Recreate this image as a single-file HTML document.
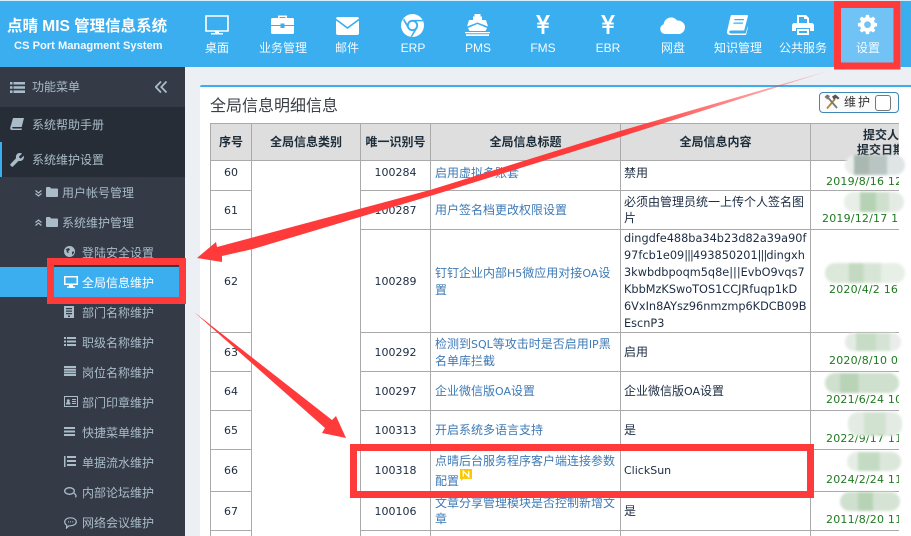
<!DOCTYPE html>
<html><head><meta charset="utf-8"><title>全局信息维护</title>
<style>
html,body{margin:0;padding:0}
body{width:911px;height:536px;overflow:hidden;position:relative;background:#ecf0f5;font:12px/16px "Liberation Sans","Noto Sans CJK SC",sans-serif;color:#fff}
.abs,.nav,.s,.ic{position:absolute}
#top{position:absolute;left:0;top:1px;width:911px;height:66px;background:#3baef0}
#topline{position:absolute;left:0;top:0;width:911px;height:1px;background:#d8eefb}
.nav{top:40px;width:66px;text-align:center;line-height:16px;font-size:12px;color:#f4fbff}
.ic{fill:#fff;stroke:none}
#side{position:absolute;left:0;top:67px;width:185px;height:469px;background:#353a47}
.s{white-space:nowrap;color:#a9bcc8;line-height:16px;font-size:12px}
.si{position:absolute;fill:#a9bcc8;stroke:none}
#panel{position:absolute;left:200px;top:85px;width:711px;height:451px;background:#fff;border-top:2px solid #3baef0;box-sizing:border-box;border-top-left-radius:2px}
#wrap{position:absolute;left:210px;top:123px;width:689px;height:413px;overflow:hidden}
table{border-collapse:collapse;table-layout:fixed;width:831px;font:12px/16px "Noto Sans CJK SC","Liberation Sans",sans-serif;color:#1c2c42}
td,th{border:1px solid #aaa;padding:0;overflow:hidden;vertical-align:middle}
th{background:#dedede;font-weight:bold;text-align:center;color:#1d2d3a;height:36px}
td{text-align:center}
td.t{text-align:left;padding-left:4px;color:#3d7ab5}
td.c{text-align:left;padding-left:3px;color:#1c2c42}
td.d{color:#1f7a1f;white-space:nowrap;line-height:18px;padding-top:16px;box-sizing:border-box;letter-spacing:.2px}
i.l{font:normal 11px/16px "DejaVu Sans",sans-serif}
.blur{position:absolute;border-radius:10px;filter:blur(1.2px)}
</style></head><body>
<div id="topline"></div>
<div id="top"></div>
<div class="abs" style="left:7px;top:17px;font-weight:bold;font-size:15.5px;line-height:20px;white-space:nowrap;color:#fff">点晴 MIS 管理信息系统</div>
<div class="abs" style="left:14px;top:38px;font-weight:bold;font-size:11.15px;line-height:16px;white-space:nowrap;color:#f2f9fe">CS Port Managment System</div>

<div class="abs" style="left:835px;top:1px;width:66px;height:66px;background:#72c3f5"></div>

<!-- nav icons -->
<svg class="ic" style="left:205px;top:15px" width="24" height="21" viewBox="0 0 24 21"><path d="M1 1h22v15H1z" fill="none" stroke="#fff" stroke-width="1.6"/><path d="M10 16h4v2h4v1.5H6V18h4z"/></svg>
<svg class="ic" style="left:271px;top:14px" width="23" height="20" viewBox="0 0 23 20"><path d="M7 4V1.5h9V4h-1.5V3h-6v1zM1.5 4h20A1.5 1.5 0 0 1 23 5.5V11H13.500V9.500h-4V11H0V5.500A1.500 1.500 0 0 1 1.500 4zM0 12h9.500v2h4v-2H23v6.500a1.500 1.500 0 0 1-1.500 1.500h-20A1.500 1.500 0 0 1 0 18.500z"/></svg>
<svg class="ic" style="left:336px;top:17px" width="23" height="18" viewBox="0 0 23 18"><path d="M2 0h19a2 2 0 0 1 2 1.500L11.500 10 0 1.500A2 2 0 0 1 2 0zM0 3.500l11.500 8.500L23 3.500V16a2 2 0 0 1-2 2H2a2 2 0 0 1-2-2z"/></svg>
<svg class="ic" style="left:401px;top:14px" width="23" height="23" viewBox="0 0 23 23"><circle cx="11.500" cy="11.500" r="11.500"/><circle cx="11.500" cy="11.500" r="5.600" fill="#3baef0"/><circle cx="11.500" cy="11.500" r="3.800"/><path d="M11.500 5.900H21.500L22 7.400 11.500 7.400zM6.700 14.300L2 6l1.100-1.500L8 13zM16.300 14.300L11 23 9.500 22.800 15 13z" fill="#3baef0"/></svg>
<svg class="ic" style="left:465px;top:14px" width="25" height="22" viewBox="0 0 25 22"><path d="M9.500 0h6v2.500h1.500V6H21l2 6.500-10.500-4-10.500 4L4 6h4V2.500h1.500zM12.500 10L22 14l-1.500 3h-16L3 14zM0 18h25v1.200H0zM1 20.300h23V22H1z"/></svg>
<svg class="ic" style="left:536px;top:15px" width="14" height="19" viewBox="0 0 17 20" preserveAspectRatio="none"><path d="M0 0h4.200l4.300 7.500L12.800 0H17l-5 8h3.500v2H10.200v1.500h5.300v2h-5.300V20H6.800v-6.500H1.500v-2h5.300V10H1.500V8H5z"/></svg>
<svg class="ic" style="left:601px;top:15px" width="14" height="19" viewBox="0 0 17 20" preserveAspectRatio="none"><path d="M0 0h4.200l4.300 7.500L12.800 0H17l-5 8h3.500v2H10.200v1.500h5.300v2h-5.300V20H6.800v-6.500H1.500v-2h5.300V10H1.500V8H5z"/></svg>
<svg class="ic" style="left:660px;top:16px" width="25" height="18" viewBox="0 0 25 18"><path d="M5 18A5 5 0 0 1 3.600 8.300 7.500 7.500 0 0 1 17.200 4.600 6.800 6.800 0 0 1 19.500 18z"/></svg>
<svg class="ic" style="left:726px;top:15px" width="22" height="20" viewBox="0 0 22 20"><path d="M6 0h15.500l.5 1-3.800 14.500H5.500c-1.800 0-2.500 1-2.300 1.800.2.700 1 1.200 2 1.200h14.500l2-7.500v2.500L20 20H4.500C2 20 .5 18.500 1 16.500L4.500 1.500C4.700.6 5.200 0 6 0zM8.500 4l-.3 1.300h9.500L18 4zM7.600 7.500l-.3 1.300h9.500l.3-1.300z"/></svg>
<svg class="ic" style="left:792px;top:15px" width="22" height="20" viewBox="0 0 22 20"><path d="M5 0h9l3 3v5h-2V4h-3V2H7v6H5zM2.500 8h17A2.500 2.500 0 0 1 22 10.500V16h-4v-3H4v3H0v-5.500A2.500 2.500 0 0 1 2.500 8zM5 14h12v6H5z"/><path d="M7 16h8v2H7z" fill="#3baef0"/></svg>
<svg class="ic" style="left:857px;top:14px" width="21" height="21" viewBox="-1 -1 23 23"><path fill-rule="evenodd" d="M8.800 0h3.400l.5 2.700 1.700.7 2.300-1.500 2.400 2.400-1.500 2.300.7 1.700L21 9v3.400l-2.700.5-.7 1.700 1.500 2.300-2.400 2.400-2.300-1.500-1.700.7-.5 2.500H8.800l-.5-2.500-1.700-.7-2.300 1.500-2.400-2.400 1.500-2.300-.7-1.700L0 12.400V9l2.700-.5.700-1.700L1.900 4.300l2.400-2.400 2.300 1.500 1.700-.7zM10.500 7a3.700 3.700 0 1 0 0 7.400 3.700 3.700 0 0 0 0-7.400z"/></svg>

<div class="nav" style="left:184px">桌面</div>
<div class="nav" style="left:250px">业务管理</div>
<div class="nav" style="left:314px">邮件</div>
<div class="nav" style="left:380px">ERP</div>
<div class="nav" style="left:445px">PMS</div>
<div class="nav" style="left:510px">FMS</div>
<div class="nav" style="left:575px">EBR</div>
<div class="nav" style="left:640px">网盘</div>
<div class="nav" style="left:705px">知识管理</div>
<div class="nav" style="left:770px">公共服务</div>
<div class="nav" style="left:835px">设置</div>

<!-- sidebar -->
<div id="side"></div>
<div class="abs" style="left:0;top:107px;width:185px;height:70px;background:#262d36"></div>
<div class="abs" style="left:0;top:142px;width:2px;height:35px;background:#3baef0"></div>
<div class="abs" style="left:0;top:267px;width:185px;height:30px;background:#3baef0"></div>

<svg class="si" style="left:10px;top:82px" width="15" height="11" viewBox="0 0 15 11"><path d="M0 0h2.500v2.500H0zM3.500 0H15v2.500H3.500zM0 4.200h2.500v2.500H0zM3.500 4.200H15v2.500H3.500zM0 8.400h2.500V11H0zM3.500 8.400H15V11H3.500z"/></svg>
<div class="s" style="left:32px;top:79px">功能菜单</div>
<svg class="si" style="left:155px;top:81px;fill:none;stroke:#a9bcc8;stroke-width:1.800" width="12" height="12" viewBox="0 0 12 12"><path d="M6 .5L.8 6 6 11.500M11.500.5L6.300 6l5.200 5.500"/></svg>

<svg class="si" style="left:10px;top:118px" width="14" height="12" viewBox="0 0 14 12"><path d="M3 0h11l-2.300 9H3C1.800 9 1.800 10.500 3 10.500h9L11.500 12H2C.5 12 0 11 .3 9.500z"/></svg>
<div class="s" style="left:32px;top:117px">系统帮助手册</div>
<svg class="si" style="left:10px;top:153px" width="14" height="14" viewBox="0 0 14 14"><path d="M9.500 0c1 0 2 .3 2.500.7L9 3.500l.5 1.500 1.500.5L13.800 2.700c.5 2.200-.3 4.700-3.300 5.300-.7.100-1.300 0-1.900-.1L3 13.500c-1 1-3.500-1.200-2.500-2.500L6 5.300C5.500 2.500 7 0 9.500 0z"/></svg>
<div class="s" style="left:32px;top:152px">系统维护设置</div>

<svg class="si" style="left:35px;top:190px;fill:none;stroke:#a9bcc8;stroke-width:1.200" width="7" height="7" viewBox="0 0 7 7"><path d="M.5 .5L3.500 3 6.500 .5M.5 3.500L3.500 6 6.500 3.500"/></svg>
<svg class="si" style="left:46px;top:187px" width="12" height="10" viewBox="0 0 12 10"><path d="M0 1a1 1 0 0 1 1-1h3l1 1.500h6a1 1 0 0 1 1 1V9a1 1 0 0 1-1 1H1a1 1 0 0 1-1-1z"/></svg>
<div class="s" style="left:62px;top:185px">用户帐号管理</div>
<svg class="si" style="left:35px;top:219px;fill:none;stroke:#a9bcc8;stroke-width:1.200" width="7" height="7" viewBox="0 0 7 7"><path d="M.5 3.500L3.500 1 6.500 3.500M.5 6.500L3.500 4 6.500 6.500"/></svg>
<svg class="si" style="left:46px;top:217px" width="12" height="10" viewBox="0 0 12 10"><path d="M0 1a1 1 0 0 1 1-1h3l1 1.500h6a1 1 0 0 1 1 1V9a1 1 0 0 1-1 1H1a1 1 0 0 1-1-1z"/></svg>
<div class="s" style="left:62px;top:215px">系统维护管理</div>

<svg class="si" style="left:64px;top:246px" width="11" height="11" viewBox="0 0 11 11"><circle cx="5.500" cy="5.500" r="5.500"/><path d="M2 3l3-1 1 2-2 1 1 2-2-.5zM8 6l1.500-1 .5 2-2 2z" fill="#353a47"/></svg>
<div class="s" style="left:82px;top:245px">登陆安全设置</div>

<svg class="si" style="left:64px;top:276px;fill:#fff" width="14" height="12" viewBox="0 0 14 12"><path fill-rule="evenodd" d="M0 0h14v9H9v1.500h2V12H3v-1.500h2V9H0zM1.500 1.500v6h11v-6z"/></svg>
<div class="s" style="left:82px;top:275px;color:#fff">全局信息维护</div>

<svg class="si" style="left:64px;top:306px" width="10" height="12" viewBox="0 0 10 12"><path fill-rule="evenodd" d="M0 0h10v12H0zM2 2v1.200h6V2zM2 4.500v1.200h6V4.500zM2 7v1.200h6V7zM4 9.500V11h2V9.500z"/></svg>
<div class="s" style="left:82px;top:305px">部门名称维护</div>
<svg class="si" style="left:64px;top:337px" width="12" height="9" viewBox="0 0 12 9"><path d="M0 0h2v2H0zM3 0h9v2H3zM0 3.500h2v2H0zM3 3.500h9v2H3zM0 7h2v2H0zM3 7h9v2H3z"/></svg>
<div class="s" style="left:82px;top:335px">职级名称维护</div>
<svg class="si" style="left:64px;top:366px" width="12" height="10" viewBox="0 0 12 10"><path d="M0 0h12v2H0zM0 2.700h12v2H0zM0 5.400h12v2H0zM0 8h12v2H0z"/></svg>
<div class="s" style="left:82px;top:365px">岗位名称维护</div>
<svg class="si" style="left:64px;top:396px" width="14" height="11" viewBox="0 0 14 11"><path fill-rule="evenodd" d="M0 0h14v11H0zM1 1v9h12V1zM2 8.500c0-2 1-2.500 1.500-2.500a1.500 1.500 0 1 1 1.500 0c.5 0 1.500.5 1.500 2.500zM8 3h4v1H8zM8 5h4v1H8zM8 7h4v1H8z"/></svg>
<div class="s" style="left:82px;top:395px">部门印章维护</div>
<svg class="si" style="left:64px;top:427px" width="11" height="9" viewBox="0 0 11 9"><path d="M0 0h11v2H0zM0 3.500h11v2H0zM0 7h11v2H0z"/></svg>
<div class="s" style="left:82px;top:425px">快捷菜单维护</div>
<svg class="si" style="left:64px;top:456px" width="12" height="11" viewBox="0 0 12 11"><path d="M0 0h1.500v11H0zM3 0h9v2H3zM3 4h9v2H3zM3 8h9v2H3z"/></svg>
<div class="s" style="left:82px;top:455px">单据流水维护</div>
<svg class="si" style="left:64px;top:487px;fill:none;stroke:#a9bcc8;stroke-width:1.300" width="13" height="11" viewBox="0 0 13 11"><ellipse cx="5.500" cy="4" rx="4.800" ry="3.300"/><path d="M10 6.500c2 .8 2.500 2.500 1.500 3.800"/></svg>
<div class="s" style="left:82px;top:485px">内部论坛维护</div>
<svg class="si" style="left:64px;top:517px;fill:none;stroke:#a9bcc8;stroke-width:1.200" width="13" height="12" viewBox="0 0 13 12"><path d="M6.500.8c3.300 0 5.800 1.700 5.800 4s-2.500 4-5.800 4H5L2.500 11l.3-2.800C1.500 7.500.7 6.300.7 4.800c0-2.300 2.500-4 5.800-4z"/><path d="M4 4.800h.8M6.200 4.800H7M8.400 4.800h.8" stroke-width="1.300"/></svg>
<div class="s" style="left:82px;top:515px">网络会议维护</div>

<!-- panel -->
<div id="panel"></div>
<div class="abs" style="left:210px;top:94px;font:16px/20px 'Noto Sans CJK SC',sans-serif;color:#3a3f45;white-space:nowrap">全局信息明细信息</div>
<div class="abs" style="left:819px;top:92px;width:78px;height:19px;border:1px solid #3f88b5;border-radius:4px;background:#fbfbfb"></div>
<svg class="abs" style="left:824px;top:94px" width="16" height="16" viewBox="0 0 16 16"><path d="M3 14.500L11 5" stroke="#b8862e" stroke-width="1.800" fill="none"/><path d="M3.500 3L13 14" stroke="#777" stroke-width="1.800" fill="none"/><path d="M8 2.500L11.500 .5 15.500 4 14 5.500 12 4 10 6z" fill="#555"/><path d="M.5 3L3 .5 6 2 3.500 5.500z" fill="#777"/></svg>
<div class="abs" style="left:844px;top:94px;font:12px/16px 'Noto Sans CJK SC',sans-serif;letter-spacing:2px;color:#333">维护</div>
<div class="abs" style="left:875px;top:95px;width:14px;height:14px;border:1px solid #777;border-radius:3px;background:#fff"></div>

<div id="wrap"><table>
<colgroup><col style="width:41px"><col style="width:109px"><col style="width:70px"><col style="width:190px"><col style="width:190px"><col style="width:231px"></colgroup>
<tr style="height:37px"><th>序号</th><th>全局信息类别</th><th>唯一识别号</th><th>全局信息标题</th><th>全局信息内容</th><th style="text-align:left;padding-left:45px;line-height:15px"><div style="width:50px;text-align:center">提交人<br>提交日期</div></th></tr>
<tr style="height:30px"><td style="padding-bottom:6px"><i class="l">60</i></td><td rowspan="9"></td><td style="padding-bottom:6px"><i class="l">100284</i></td><td class="t" style="padding-bottom:6px">启用虚拟多账套</td><td class="c" style="padding-bottom:6px">禁用</td><td class="d" style="text-align:left;padding-left:15px;padding-top:10px"><i class="l">2019/8/16 12:30:15</i></td></tr>
<tr style="height:39px"><td><i class="l">61</i></td><td><i class="l">100287</i></td><td class="t">用户签名档更改权限设置</td><td class="c">必须由管理员统一上传个人签名图片</td><td class="d" style="text-align:left;padding-left:11px"><i class="l">2019/12/17 10:20:33</i></td></tr>
<tr style="height:103px"><td><i class="l">62</i></td><td><i class="l">100289</i></td><td class="t">钉钉企业内部<i class="l">H5</i>微应用对接<i class="l">OA</i>设置</td><td class="c" style="white-space:nowrap"><i class="l" style="font-size:11.3px">dingdfe488ba34b23d82a39a90f<br>97fcb1e09<span style="letter-spacing:-.9px">|||</span>493850201<span style="letter-spacing:-.9px">|||</span>dingxh<br>3kwbdbpoqm5q8e|||EvbO9vqs7<br>KbbMzKSwoTOS1CCJRfuqp1kD<br>6VxIn8AYsz96nmzmp6KDCB09B<br>EscnP3</i></td><td class="d" style="text-align:left;padding-left:18px"><i class="l">2020/4/2 16:08:21</i></td></tr>
<tr style="height:39px"><td><i class="l">63</i></td><td><i class="l">100292</i></td><td class="t">检测到<i class="l">SQL</i>等攻击时是否启用<i class="l">IP</i>黑名单库拦截</td><td class="c">启用</td><td class="d" style="text-align:left;padding-left:18px"><i class="l">2020/8/10 09:12:40</i></td></tr>
<tr style="height:39px"><td><i class="l">64</i></td><td><i class="l">100297</i></td><td class="t">企业微信版<i class="l">OA</i>设置</td><td class="c">企业微信版<i class="l">OA</i>设置</td><td class="d" style="text-align:left;padding-left:15px"><i class="l">2021/6/24 10:15:26</i></td></tr>
<tr style="height:39px"><td><i class="l">65</i></td><td><i class="l">100313</i></td><td class="t">开启系统多语言支持</td><td class="c">是</td><td class="d" style="text-align:left;padding-left:15px"><i class="l">2022/9/17 11:40:52</i></td></tr>
<tr style="height:42px"><td><i class="l">66</i></td><td><i class="l">100318</i></td><td class="t">点晴后台服务程序客户端连接参数配置<svg width="12" height="12" viewBox="0 0 11 11" style="vertical-align:4px;margin-left:1px"><path d="M0 0h11v9H3l-2 2V9H0z" fill="#fcc800"/><path d="M3 7V2l5 5V2" stroke="#fff" stroke-width="1.200" fill="none"/></svg></td><td class="c"><i class="l">ClickSun</i></td><td class="d" style="text-align:left;padding-left:15px"><i class="l">2024/2/24 11:05:18</i></td></tr>
<tr style="height:39px"><td><i class="l">67</i></td><td><i class="l">100106</i></td><td class="t">文章分享管理模块是否控制新增文章</td><td class="c">是</td><td class="d" style="text-align:left;padding-left:15px"><i class="l">2011/8/20 11:22:09</i></td></tr>
<tr style="height:30px"><td></td><td></td><td></td><td></td><td></td></tr>
</table></div>

<!-- blurred names -->
<div class="blur" style="left:845px;top:155px;width:60px;height:20px;background:linear-gradient(90deg,#e9eeec 0 15%,#a9b8b0 15% 40%,#b9c5c2 40% 70%,#dfe5e4 70% 100%)"></div>
<div class="blur" style="left:844px;top:192px;width:60px;height:20px;background:linear-gradient(90deg,#e8efe8 0 27%,#b6d2b4 27% 53%,#cfe0cf 53% 75%,#e4ebe4 75% 100%)"></div>
<div class="blur" style="left:825px;top:263px;width:80px;height:20px;background:linear-gradient(90deg,#dbe8da 0 30%,#c3d9c1 30% 48%,#d7e5d6 48% 70%,#e7efe7 70% 100%)"></div>
<div class="blur" style="left:845px;top:333px;width:56px;height:18px;background:linear-gradient(90deg,#e4ebe4 0 20%,#c6dcc5 20% 55%,#d5e3d5 55% 80%,#e9ecea 80% 100%)"></div>
<div class="blur" style="left:825px;top:373px;width:74px;height:20px;background:linear-gradient(90deg,#cfe0ce 0 20%,#b9d3b7 20% 45%,#cfe0ce 45% 100%)"></div>
<div class="blur" style="left:848px;top:412px;width:54px;height:24px;background:linear-gradient(90deg,#e4ebe4 0 30%,#d2e2d1 30% 70%,#e4ebe4 70% 100%)"></div>
<div class="blur" style="left:847px;top:452px;width:54px;height:19px;background:linear-gradient(90deg,#e6ede6 0 20%,#c3dbc2 20% 60%,#dbe7da 60% 100%)"></div>
<div class="blur" style="left:840px;top:492px;width:60px;height:19px;background:linear-gradient(90deg,#cfe0ce 0 30%,#b7d3b5 30% 55%,#d5e3d4 55% 100%)"></div>

<!-- annotations -->
<svg class="abs" style="left:0;top:0" width="911" height="536" viewBox="0 0 911 536">
<defs><linearGradient id="g1" gradientUnits="userSpaceOnUse" x1="828" y1="71" x2="620" y2="132"><stop offset="0" stop-color="#ff3a3a" stop-opacity=".25"/><stop offset="1" stop-color="#ff3a3a"/></linearGradient></defs>
<path d="M620 131L430 190 217 247 216 242 197 258 222 262 222 256 253 249 440 193 620 137Z" fill="#ff3a3a"/>
<path d="M620 131L828 71 620 137Z" fill="url(#g1)"/>
<path d="M194 312L332 420 336 416 346 438 322 433 325 428Z" fill="#ff3a3a"/>
<path d="M837.500 4.500h59.500v61.500h-59.500z" fill="none" stroke="#ff3a3a" stroke-width="7"/>
<path d="M50.500 261.500h132v39h-132z" fill="none" stroke="#ff3a3a" stroke-width="7"/>
<path d="M353.500 447.500h457v47h-457z" fill="none" stroke="#ff3a3a" stroke-width="7"/>
</svg>
</body></html>
